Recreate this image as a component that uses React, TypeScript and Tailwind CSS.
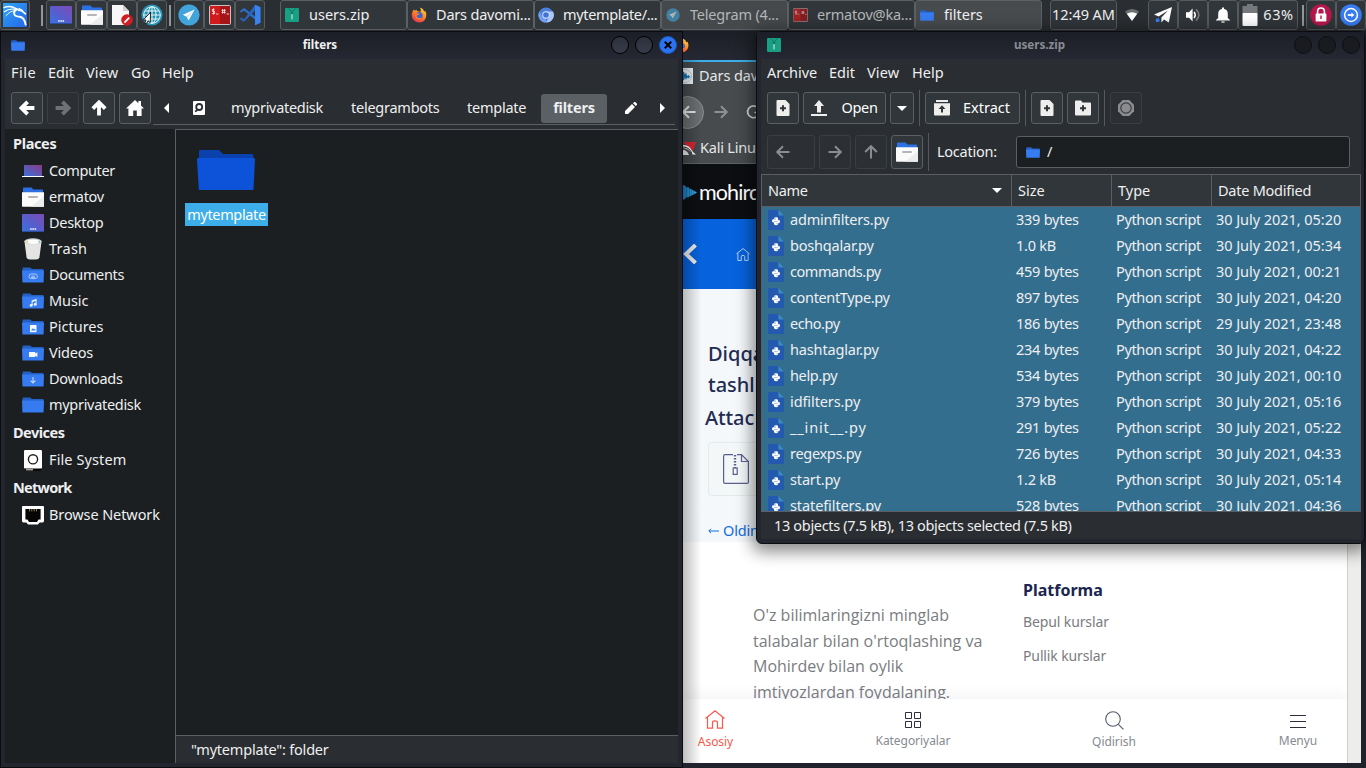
import React, { useId } from "react";

type Kind = "plain" | "doc" | "music" | "pic" | "video" | "down";

function Folder({ kind = "plain", className = "" }: { kind?: Kind; className?: string }) {
  return (
    <svg viewBox="0 0 22 16" preserveAspectRatio="none" className={className}>
      <path d="M0.5 1.2 Q0.5 0.5 1.2 0.5 H8 L10 2 H20.8 Q21.5 2 21.5 2.8 V6 H0.5Z" fill="#2461c4" />
      <path d="M0 3.6 H22 L21.6 15 Q21.6 15.6 21 15.6 H1 Q0.4 15.6 0.4 15Z" fill="#367bf0" />
      {kind === "doc" && (
        <g fill="none" stroke="#a9c9fb" strokeWidth="1">
          <rect x="7" y="7" width="8.4" height="4.6" rx="2.3" />
          <path d="M13 9.2H9.4M9 10.4h4" />
        </g>
      )}
      {kind === "music" && (
        <g fill="#e6effd">
          <path d="M9.6 7.6 L14.6 5.8 V11h-1V8l-3 1.1V12h-1z" />
          <circle cx="9.2" cy="12.2" r="1.5" />
          <circle cx="13.2" cy="11.2" r="1.5" />
        </g>
      )}
      {kind === "pic" && (
        <g>
          <rect x="8" y="6" width="6.5" height="7.2" fill="#f5f9ff" />
          <path d="M9 11.6 L10.8 9.2 12 10.4 12.8 9.6 13.6 11.6Z" fill="#367bf0" />
        </g>
      )}
      {kind === "video" && (
        <path d="M7 7h6.2v1.4L15.4 7.2v4.8L13.2 10.8V12H7z" fill="#f5f9ff" />
      )}
      {kind === "down" && (
        <g fill="none" stroke="#c3dafc" strokeWidth="1.1">
          <path d="M11 6v5.6M8.6 9.6 11 12l2.4-2.4" />
        </g>
      )}
    </svg>
  );
}

function HomeFolder({ className = "" }: { className?: string }) {
  return (
    <svg viewBox="0 0 22 20" className={className}>
      <path d="M1 5V1.2Q1 .4 1.8 .4H9.5L11.4 2.4H20.2Q21 2.4 21 3.2V6H1Z" fill="#2d70e4" />
      <path d="M0 5.3H22V19Q22 19.7 21.3 19.7H.7Q0 19.7 0 19Z" fill="#fbfbfb" />
      <path d="M22 9V19.7H9Z" fill="#ececec" />
      <rect x="6" y="9" width="10" height="2" rx="1" fill="#b5b5b5" />
    </svg>
  );
}

function DesktopIcon({ className = "" }: { className?: string }) {
  const id = useId();
  return (
    <svg viewBox="0 0 22 18" className={className}>
      <linearGradient id={id} x1="0" y1="1" x2="1" y2="0">
        <stop offset="0" stopColor="#3673e2" />
        <stop offset="0.5" stopColor="#5a5ccc" />
        <stop offset="1" stopColor="#7d4db4" />
      </linearGradient>
      <rect width="22" height="18" rx="0.8" fill={`url(#${id})`} />
      <path d="M0 17.5H22" stroke="#2c4e9e" />
      <path d="M8.2 15h1.5M10.4 15h1.5M12.6 15h1.5" stroke="#fff" strokeWidth="1.3" />
    </svg>
  );
}

function ComputerIcon() {
  return (
    <svg viewBox="0 0 22 14" className="h-[14px] w-[22px]">
      <linearGradient id="pc" x1="0" y1="1" x2="1" y2="0">
        <stop offset="0" stopColor="#3a6fd8" />
        <stop offset="1" stopColor="#8c3a86" />
      </linearGradient>
      <rect x="2" y="1" width="18" height="11" fill="url(#pc)" />
      <path d="M0 12.5H22" stroke="#fff" />
    </svg>
  );
}

function TrashIcon() {
  return (
    <svg viewBox="0 0 18 22" className="h-[22px] w-[18px]">
      <path d="M0.4 3 H17.6 L15.4 19.4 Q15 21.6 9 21.6 T2.6 19.4Z" fill="#e4e4e2" />
      <ellipse cx="9" cy="3.3" rx="8.7" ry="3" fill="#cfcfcd" />
      <ellipse cx="9" cy="3.8" rx="7.4" ry="2.2" fill="#fdfdfd" />
      <path d="M2 4.6 3.4 2.8 4.6 4.6Z" fill="#e6b94a" />
      <path d="M14 3.4 15.8 3.2 15.6 5Z" fill="#36a38c" />
    </svg>
  );
}

function DiskIcon() {
  return (
    <svg viewBox="0 0 18 21" className="h-[21px] w-[18px]">
      <rect x="0" y="0" width="18" height="18.5" rx="1.2" fill="#fff" />
      <path d="M1 19.8H17" stroke="#050505" strokeWidth="1.8" />
      <path d="M2 19.8H9" stroke="#e5e5e5" strokeWidth="1" />
      <circle cx="9" cy="9.3" r="4.6" fill="none" stroke="#1b1f22" strokeWidth="1.4" />
    </svg>
  );
}

function NetIcon() {
  return (
    <svg viewBox="0 0 22 19" className="h-[19px] w-[22px]">
      <path d="M1 0H21Q22 0 22 1V15Q22 16.4 20.6 16.6H17.6L16 18.6H6L4.4 16.6H1.4Q0 16.4 0 15V1Q0 0 1 0Z" fill="#fff" />
      <path d="M3.4 3H18.6V13.4H16.6L15 16H7L5.4 13.4H3.4Z" fill="#050505" />
      <path d="M7.5 3V5.4M9.8 3V5.4M12.2 3V5.4M14.5 3V5.4" stroke="#a39a62" strokeWidth="0.8" />
    </svg>
  );
}

function ZipIcon({ className = "" }: { className?: string }) {
  return (
    <svg viewBox="0 0 14 14" className={className}>
      <rect width="14" height="14" rx="1.3" fill="#18a085" />
      <path d="M3.6 .4 6.4 3.4V6M10.4 .4 7.6 3.4V6" fill="none" stroke="#12705f" strokeWidth="0.9" />
      <rect x="6.1" y="6" width="1.8" height="5.4" rx=".6" fill="#8cc9bd" />
    </svg>
  );
}

function PythonIcon() {
  return (
    <svg viewBox="0 0 16 20" className="h-[20px] w-[16px] shrink-0">
      <path d="M1 0H10.4L16 5.4V19Q16 20 15 20H1Q0 20 0 19V1Q0 0 1 0Z" fill="#2459b0" />
      <path d="M10.4 0V4.4Q10.4 5.4 11.4 5.4H16Z" fill="#3a8cbf" />
      <path d="M8 7.2C9.4 7.2 10 7.6 10 8.6V10.2Q10 11.2 9 11.2H7Q6 11.2 6 12.4H5Q4 12.2 4 10.8T5 9.2H8.1V8.8H6V8.4Q6 7.2 8 7.2Z" fill="#fff" />
      <path d="M8 15.2C6.6 15.2 6 14.8 6 13.8V12.6Q6 11.6 7 11.6H9Q10.4 11.4 10.4 9.8H11Q12 10.2 12 11.6T11 13.2H7.9V13.6H10V14Q10 15.2 8 15.2Z" fill="#fff" />
    </svg>
  );
}

function Firefox({ className = "" }: { className?: string }) {
  const id = useId();
  return (
    <svg viewBox="0 0 16 16" className={className}>
      <linearGradient id={id} x1="0.8" y1="0" x2="0.2" y2="1">
        <stop offset="0" stopColor="#ffd43c" />
        <stop offset="0.45" stopColor="#ff8a1f" />
        <stop offset="1" stopColor="#e8245c" />
      </linearGradient>
      <path d="M1.6 4.6 2.6 2.4 4.2 3.8 5.2 2.6 6 4Q8 4.2 8.6 5L10 4 9.2 .6Q12.4 1.6 13.2 4.4L14.4 4Q16 7 15 10.4Q13.2 15.4 8 15.4Q2.6 15.2 .9 10Q.2 7 1.6 4.6Z" fill={`url(#${id})`} />
      <circle cx="8" cy="8.8" r="3.7" fill="#3b63d8" />
      <path d="M3.8 6.4Q6 5.2 8.6 6.8L7.4 8.2H5.8Q5.4 9.8 7 10.8Q9 11.6 11.4 10.2Q10.4 13 7.4 12.8Q3.8 12 3.8 6.4Z" fill="#ff7b23" />
    </svg>
  );
}

function Chromium() {
  return (
    <svg viewBox="0 0 16 16" className="h-[16px] w-[16px]">
      <circle cx="8" cy="8" r="7.6" fill="#4d80dc" />
      <path d="M8 4.4H15A7.6 7.6 0 0 1 8 15.6L11.3 9.8Z" fill="#a9c6fa" />
      <path d="M1.2 4.6 4.8 10 8 11.6 8 15.6A7.6 7.6 0 0 1 1.2 4.6Z" fill="#6f9df0" />
      <circle cx="8" cy="8" r="3.7" fill="#dfeafd" />
      <circle cx="8" cy="8" r="2.8" fill="#3f73d4" />
    </svg>
  );
}

function Telegram({ className = "" }: { className?: string }) {
  return (
    <svg viewBox="0 0 22 22" className={className}>
      <circle cx="11" cy="11" r="10.6" fill="#41a5dc" />
      <path d="M16.6 5.4 4.8 10.8 8.6 12.8 10.6 16.6Z" fill="#fff" />
      <path d="M16.6 5.4 8.6 12.8 9.2 13.4Z" fill="#a8d0ea" />
    </svg>
  );
}

function Terminal({ className = "" }: { className?: string }) {
  return (
    <svg viewBox="0 0 22 20" className={className}>
      <rect x=".5" y=".5" width="21" height="19" rx="1" fill="#a51417" stroke="#c9c1c1" />
      <path d="M1 1H11V19H1Z" fill="#d01a1c" />
      <g stroke="#f4e4e4" fill="none" strokeWidth="0.9">
        <path d="M5.6 4.4H3.4V6.4H5.6V8.6H3.2M4.5 3.4V9.6M7 9H9.4" />
        <path d="M13.6 4V8.6M15.6 4V8.6M12.6 5.4H16.6M12.6 7.4H16.6M17.6 9H20" />
      </g>
    </svg>
  );
}

function Globe() {
  return (
    <svg viewBox="0 0 22 22" className="h-[22px] w-[22px]">
      <circle cx="11" cy="11" r="10.6" fill="#2793b2" />
      <g fill="none" stroke="#e6f7fb" strokeWidth="1">
        <circle cx="11" cy="11" r="8.3" />
        <ellipse cx="11" cy="11" rx="4" ry="8.3" />
        <path d="M11 2.7V19.3M2.7 11H19.3M4 7H18M4 15H18" />
      </g>
      <path d="M9.6 8.2 2.2 16 5 16 3.8 18.8 5.6 19.6 7 16.8 9.2 18.6Z" fill="#fff" stroke="#111" strokeWidth="0.9" />
    </svg>
  );
}

function EditorIcon() {
  return (
    <svg viewBox="0 0 22 22" className="h-[22px] w-[22px]">
      <path d="M1 1H12L18 7V21H1Z" fill="#f7f7f7" />
      <path d="M12 1V7H18Z" fill="#d0d0d0" />
      <circle cx="16" cy="16" r="5.8" fill="#d01d22" />
      <path d="M13.4 18.6 18.2 13.6" stroke="#fff" strokeWidth="1.8" />
    </svg>
  );
}

function VsCode() {
  return (
    <svg viewBox="0 0 22 22" className="h-[22px] w-[22px]">
      <path d="M16 .8 21.4 3.2V18.8L16 21.2V15.6L5 6.4 2.2 8.4.8 7.4 4 4.4 5.6 4.2 16 12.6Z" fill="#2f6fd0" />
      <path d="M16 .8V6.6L5.4 17.4 4 17.6.8 15 2.2 13.4 5 15.4 15.4 1.4Z" fill="#2a63bd" />
      <path d="M16 .8 21.4 3.2V18.8L16 21.2Z" fill="#3a83ea" />
    </svg>
  );
}

function KaliDragon() {
  return (
    <svg viewBox="0 0 24 24" className="h-[24px] w-[24px]">
      <linearGradient id="kali" x1="0" y1="0" x2="1" y2="1">
        <stop offset="0" stopColor="#2fa4f2" />
        <stop offset="1" stopColor="#2466ea" />
      </linearGradient>
      <rect width="24" height="24" fill="url(#kali)" />
      <g fill="none" stroke="#fff" strokeLinecap="round" strokeLinejoin="round">
        <path d="M1 4.600Q7 2 13 5.600" strokeWidth="1.300" />
        <path d="M1.200 8.800Q6.500 5 12.800 6.400" strokeWidth="1.100" />
        <path d="M3 12.600Q6.600 7.800 12 7.400" strokeWidth="0.900" />
        <path d="M13.600 6.400Q10.400 8 11.200 11Q12.200 13.600 16.600 13.800Q21.400 14.400 22.600 21.600" strokeWidth="1.900" />
        <path d="M13 5.600Q15.600 7.600 18.600 7.600L22.400 10.800" strokeWidth="1.700" />
        <path d="M16 5.600 19.600 7.600" strokeWidth="1.200" />
      </g>
    </svg>
  );
}

function Arrow({ dir, className = "" }: { dir: "l" | "r" | "u"; className?: string }) {
  const rot = dir === "l" ? "" : dir === "r" ? "rotate(180 8 8)" : "rotate(90 8 8)";
  return (
    <svg viewBox="0 0 16 16" className={`h-[16px] w-[16px] ${className}`} fill="none" stroke="currentColor">
      <path d="M15.4 8H2.6M8.6 1.8 2.400 8l6.2 6.2" strokeWidth="3.8" transform={rot} />
    </svg>
  );
}

function ThinArrow({ dir, className = "" }: { dir: "l" | "r" | "u"; className?: string }) {
  const rot = dir === "l" ? "" : dir === "r" ? "rotate(180 8 8)" : "rotate(90 8 8)";
  return (
    <svg viewBox="0 0 16 16" className={`h-[16px] w-[16px] ${className}`} fill="none" stroke="currentColor">
      <path d="M14.5 8H2.2M8 2.2 2.2 8 8 13.8" strokeWidth="2" transform={rot} />
    </svg>
  );
}

function PanelBtn({ w, children }: { w: string; children: React.ReactNode }) {
  return (
    <div className={`flex h-[30px] shrink-0 items-center justify-center rounded-[3px] border border-[#565b5e] bg-[#31363a] ${w}`}>
      {children}
    </div>
  );
}

function Task({ label, icon, tone = "bg-[#31363a] text-[#eeeff0]", spacing = "tracking-[-0.2px]" }: { label: string; icon: React.ReactNode; tone?: string; spacing?: string }) {
  return (
    <div className={`flex h-[30px] w-[127px] shrink-0 items-center rounded-[3px] border border-[#5b6063] pl-[3px] text-[14.5px] whitespace-nowrap ${tone}`}>
      <span className="flex w-[16px] justify-center">{icon}</span>
      <span className={`ml-[9px] ${spacing}`}>{label}</span>
    </div>
  );
}

function Panel() {
  return (
    <header className="flex h-[31px] w-full items-start bg-[#2a2d31] pb-px text-[#eeeff0]">
      <PanelBtn w="w-[30px]"><KaliDragon /></PanelBtn>
      <div className="mt-[5px] ml-[11px] h-[21px] w-[2px] shrink-0 bg-[#94979a]" />
      <div className="ml-[3px] flex">
        <PanelBtn w="w-[30px]"><DesktopIcon className="h-[18px] w-[22px]" /></PanelBtn>
        <PanelBtn w="w-[31px]"><HomeFolder className="h-[20px] w-[22px]" /></PanelBtn>
        <PanelBtn w="w-[30px]"><EditorIcon /></PanelBtn>
        <PanelBtn w="w-[30px]"><Globe /></PanelBtn>
      </div>
      <div className="mt-[5px] ml-[2px] h-[21px] w-[2px] shrink-0 bg-[#94979a]" />
      <div className="ml-[3px] flex">
        <PanelBtn w="w-[30px]"><Telegram className="h-[22px] w-[22px]" /></PanelBtn>
        <PanelBtn w="w-[31px]"><Terminal className="h-[20px] w-[22px]" /></PanelBtn>
        <PanelBtn w="w-[30px]"><VsCode /></PanelBtn>
      </div>
      <div className="ml-[15px] flex">
        <Task label="users.zip" spacing="" icon={<ZipIcon className="h-[14px] w-[14px]" />} />
        <Task label="Dars davomi..." icon={<Firefox className="h-[16px] w-[16px]" />} />
        <Task label="mytemplate/..." spacing="tracking-[-0.35px]" icon={<Chromium />} />
        <Task label="Telegram (4..." tone="bg-[#45494c] text-[#b4b6b8]" icon={<Telegram className="h-[14px] w-[14px] opacity-60" />} />
        <Task label="ermatov@ka..." tone="bg-[#31363a] text-[#b4b6b8]" icon={<Terminal className="h-[14px] w-[15px] opacity-70" />} />
        <Task label="filters" spacing="" tone="bg-[#484b4e] text-[#eeeff0]" icon={<Folder className="h-[11px] w-[14px]" />} />
      </div>
      <div className="ml-[8px] flex">
        <PanelBtn w="w-[67px]"><span className="text-[14.5px] tracking-[-0.05px] whitespace-nowrap">12:49 AM</span></PanelBtn>
      </div>
      <div className="flex h-[30px] w-[31px] items-center justify-center pr-[2px]">
        <svg viewBox="0 0 14 12" className="h-[12px] w-[14px]">
          <path d="M7 12 0 2.6Q7 -2.4 14 2.6Z" fill="#6d7174" />
          <path d="M7 12 1.8 4.8Q7 1.6 12.2 4.8Z" fill="#fff" />
        </svg>
      </div>
      <div className="flex">
        <PanelBtn w="w-[30px]">
          <svg viewBox="0 0 18 16" className="h-[16px] w-[18px]">
            <path d="M18 0 0 7.600 4.600 9.600 14 3.600 7.400 10.600V15.600L10 12.400 14.800 15.400Z" fill="#fff" />
            <circle cx="3.600" cy="13.200" r="2" fill="#367bf0" />
          </svg>
        </PanelBtn>
        <PanelBtn w="w-[30px]">
          <svg viewBox="0 0 16 16" className="h-[16px] w-[16px]">
            <path d="M1 5.2H4L7.6 1.6V14.4L4 10.8H1Z" fill="#fff" />
            <path d="M9 5Q11.4 8 9 11" stroke="#fff" strokeWidth="1.6" fill="none" />
            <path d="M11 2.4Q16.6 8 11 13.6" stroke="#777b7e" strokeWidth="1.6" fill="none" />
          </svg>
        </PanelBtn>
        <PanelBtn w="w-[30px]">
          <svg viewBox="0 0 16 16" className="h-[16px] w-[16px]" fill="#fff">
            <path d="M7 .6H9V2Q12.8 2.6 12.8 7V11L15 13V13.6H1V13L3.2 11V7Q3.2 2.6 7 2Z" />
            <path d="M6.4 14.4H9.6V15.6H6.4Z" />
          </svg>
        </PanelBtn>
        <PanelBtn w="w-[60px]">
          <svg viewBox="0 0 16 22" className="h-[22px] w-[16px] shrink-0">
            <path d="M5 0H11V2H15.5V10H.5V2H5Z" fill="#75797c" />
            <rect x=".5" y="9" width="15" height="13" rx="1" fill="#fff" />
          </svg>
          <span className="ml-[5px] text-[14.5px] tracking-[0.6px]">63%</span>
        </PanelBtn>
      </div>
      <div className="mt-[5px] ml-[4px] h-[21px] w-[2px] shrink-0 bg-[#94979a]" />
      <div className="ml-[2px] flex">
        <PanelBtn w="w-[30px]">
          <svg viewBox="0 0 22 22" className="h-[22px] w-[22px]">
            <circle cx="11" cy="11" r="10.8" fill="#b5174b" />
            <path d="M7.6 10V7.4Q7.6 4 11 4T14.4 7.4V10" fill="none" stroke="#fff" strokeWidth="1.6" />
            <rect x="5.6" y="9.4" width="10.8" height="8" rx=".6" fill="#fff" />
            <path d="M11 11.6V15" stroke="#b5174b" strokeWidth="1.4" />
          </svg>
        </PanelBtn>
        <PanelBtn w="w-[30px]">
          <svg viewBox="0 0 22 22" className="h-[22px] w-[22px]">
            <circle cx="11" cy="11" r="10.8" fill="#367bf0" />
            <circle cx="11" cy="11" r="6.4" fill="none" stroke="#fff" strokeWidth="1.5" />
            <path d="M7.8 11H12" stroke="#fff" strokeWidth="1.8" />
            <path d="M11.4 8.4 14.4 11 11.4 13.6Z" fill="#fff" />
          </svg>
        </PanelBtn>
      </div>
    </header>
  );
}

function TitleBar({ title, icon, active }: { title: string; icon: React.ReactNode; active: boolean }) {
  const dot = active ? "border-black bg-linear-to-b from-[#2c303c] to-[#383c4a]" : "border-[#0e0f13] bg-[#1a1b20]";
  return (
    <div className="flex h-[27px] shrink-0 items-center bg-linear-to-b from-[#1c1e27] to-[#252832] pb-px pl-[10px]">
      <span className="flex w-[14px]">{icon}</span>
      <span className={`flex-1 text-center text-[11.6px] font-bold ${active ? "pl-[4px] text-[#f2f2f2]" : "pl-[4px] text-[#888b93]"}`}>{title}</span>
      <div className={`flex gap-[6px] ${active ? "pr-[5px]" : "pr-[4px]"}`}>
        <span className={`h-[18px] w-[18px] rounded-full border ${dot}`} />
        <span className={`h-[18px] w-[18px] rounded-full border ${dot}`} />
        {active ? (
          <span className="flex h-[18px] w-[18px] items-center justify-center rounded-full border border-[#1c56c0] bg-[#2a74f2]">
            <svg viewBox="0 0 8 8" className="h-[8px] w-[8px]"><path d="M.8 .8 7.2 7.2M7.2 .8 .8 7.2" stroke="#000" strokeWidth="2" /></svg>
          </span>
        ) : (
          <span className={`h-[18px] w-[18px] rounded-full border ${dot}`} />
        )}
      </div>
    </div>
  );
}

function Btn({ w = "w-[32px]", h = "h-[32px]", dim = false, children }: { w?: string; h?: string; dim?: boolean; children: React.ReactNode }) {
  return (
    <div className={`flex shrink-0 items-center justify-center rounded-[3px] border ${w} ${h} ${dim ? "border-[#3b3f43] bg-[#2c3034] text-[#6f7274]" : "border-[#5b5f63] bg-[#31363b] text-white"}`}>
      {children}
    </div>
  );
}

function PlaceRow({ icon, label, spacing = "" }: { icon: React.ReactNode; label: string; spacing?: string }) {
  return (
    <div className="flex h-[26px] items-center pl-[17px]">
      <span className="flex w-[22px] justify-center">{icon}</span>
      <span className={`ml-[5px] whitespace-nowrap ${spacing}`}>{label}</span>
    </div>
  );
}

function FileManager() {
  return (
    <section className="absolute top-[31px] left-0 flex h-[737px] w-[683px] flex-col rounded-t-[6px] border border-[#0b0c10] bg-[#23252f]">
      <TitleBar active title="filters" icon={<Folder className="h-[11px] w-[14px]" />} />
      <div className="mr-[4px] mb-[4px] ml-[4px] flex min-h-0 flex-1 flex-col bg-[#2a2d31] text-[14.5px] text-[#eeeff0]">
        <nav className="flex h-[27px] shrink-0 items-center pl-[6px]">
          <span className="w-[37px] tracking-[0.5px]">File</span>
          <span className="w-[38px]">Edit</span>
          <span className="w-[45px] tracking-[0.15px]">View</span>
          <span className="w-[31px]">Go</span>
          <span>Help</span>
        </nav>
        <div className="flex h-[43px] shrink-0 items-start pt-[6px] pl-[6px]">
          <div className="flex gap-[4px]">
            <Btn><Arrow dir="l" /></Btn>
            <Btn dim><Arrow dir="r" /></Btn>
            <Btn><Arrow dir="u" /></Btn>
            <Btn>
              <svg viewBox="0 0 18 16" className="h-[16px] w-[18px]" fill="#fff">
                <path d="M9 0 12.4 3.2V1H15V5.6L18 8.6H15.6V16H10.8V10.6H7.2V16H2.4V8.6H0Z" />
              </svg>
            </Btn>
          </div>
          <div className="ml-[2px] flex h-[33px] w-[522px] items-center border-b border-[#5b5f63]">
            <svg viewBox="0 0 5 10" className="ml-[11px] h-[10px] w-[5px]"><path d="M5 0V10L0 5Z" fill="#fff" /></svg>
            <svg viewBox="0 0 12 14" className="ml-[24px] h-[14px] w-[12px]">
              <rect width="12" height="14" rx="1" fill="#fff" />
              <circle cx="6.2" cy="6" r="3" fill="none" stroke="#2a2d31" strokeWidth="1.8" />
              <path d="M2 10.500 4.400 9.200" stroke="#2a2d31" strokeWidth="1.6" />
            </svg>
            <span className="ml-[26px] w-[92px] tracking-[-0.3px]">myprivatedisk</span>
            <span className="ml-[28px] w-[88px] tracking-[-0.25px]">telegrambots</span>
            <span className="ml-[28px] w-[59px] tracking-[-0.25px]">template</span>
            <span className="ml-[15px] flex h-[29px] w-[66px] items-center justify-center rounded-[3px] bg-[#5b6064] font-bold tracking-[-0.2px]">filters</span>
            <svg viewBox="0 0 12 12" className="ml-[18px] h-[12px] w-[12px]" fill="#fff">
              <path d="M0 12V9L7 2 10 5 3 12ZM8 1.2 9.2 0H10.2L12 1.8V2.8L10.8 4Z" />
            </svg>
            <svg viewBox="0 0 5 10" className="ml-[23px] h-[10px] w-[5px]"><path d="M0 0V10L5 5Z" fill="#fff" /></svg>
          </div>
        </div>
        <div className="flex min-h-0 flex-1 bg-[#1b1f22]">
          <aside className="w-[170px] shrink-0">
            <div className="flex h-[29px] items-center pl-[8px] font-bold tracking-[-0.35px]">Places</div>
            <PlaceRow label="Computer" spacing="tracking-[-0.35px]" icon={<ComputerIcon />} />
            <PlaceRow label="ermatov" spacing="tracking-[-0.3px]" icon={<HomeFolder className="h-[20px] w-[22px]" />} />
            <PlaceRow label="Desktop" spacing="tracking-[-0.3px]" icon={<DesktopIcon className="h-[18px] w-[22px]" />} />
            <PlaceRow label="Trash" spacing="tracking-[0.25px]" icon={<TrashIcon />} />
            <PlaceRow label="Documents" spacing="tracking-[-0.35px]" icon={<Folder kind="doc" className="h-[16px] w-[22px]" />} />
            <PlaceRow label="Music" spacing="tracking-[-0.1px]" icon={<Folder kind="music" className="h-[16px] w-[22px]" />} />
            <PlaceRow label="Pictures" icon={<Folder kind="pic" className="h-[16px] w-[22px]" />} />
            <PlaceRow label="Videos" spacing="tracking-[-0.2px]" icon={<Folder kind="video" className="h-[16px] w-[22px]" />} />
            <PlaceRow label="Downloads" spacing="tracking-[-0.25px]" icon={<Folder kind="down" className="h-[16px] w-[22px]" />} />
            <PlaceRow label="myprivatedisk" spacing="tracking-[-0.3px]" icon={<Folder className="h-[16px] w-[22px]" />} />
            <div className="flex h-[29px] items-center pl-[8px] font-bold tracking-[-0.5px]">Devices</div>
            <PlaceRow label="File System" spacing="tracking-[0.1px]" icon={<DiskIcon />} />
            <div className="flex h-[29px] items-center pl-[8px] font-bold tracking-[-0.75px]">Network</div>
            <PlaceRow label="Browse Network" spacing="tracking-[-0.1px]" icon={<NetIcon />} />
          </aside>
          <div className="flex flex-1 flex-col border-l border-[#5b5f63]">
            <div className="flex-1 border-t border-[#5b5f63] pt-[19px] pl-[9px]">
              <div className="flex w-[83px] flex-col items-start">
                <svg viewBox="0 0 58 42" className="ml-[12px] h-[42px] w-[58px]">
                  <path d="M2 2Q2 1 3 1H22L26 5H55Q56.400 5 56.400 7V12H2Z" fill="#0b41ad" />
                  <path d="M0 10.500Q0 9 1.500 9H56.500Q58 9 58 10.500L56.500 40Q56.500 41 55.500 41H3Q1.800 41 1.800 40Z" fill="#0d53da" />
                </svg>
                <span className="mt-[12px] flex h-[23px] w-[83px] items-center justify-center bg-[#3daee9] tracking-[-0.35px] text-white">mytemplate</span>
              </div>
            </div>
            <div className="flex h-[28px] items-center border-t border-[#5b5f63] bg-[#2a2d31] pl-[15px] tracking-[-0.2px]">"mytemplate": folder</div>
          </div>
        </div>
      </div>
    </section>
  );
}

const files: [string, string, string, string][] = [
  ["adminfilters.py", "339 bytes", "30 July 2021, 05:20", "tracking-[-0.2px]"],
  ["boshqalar.py", "1.0 kB", "30 July 2021, 05:34", "tracking-[-0.2px]"],
  ["commands.py", "459 bytes", "30 July 2021, 00:21", "tracking-[-0.45px]"],
  ["contentType.py", "897 bytes", "30 July 2021, 04:20", "tracking-[-0.35px]"],
  ["echo.py", "186 bytes", "29 July 2021, 23:48", "tracking-[-0.45px]"],
  ["hashtaglar.py", "234 bytes", "30 July 2021, 04:22", "tracking-[-0.15px]"],
  ["help.py", "534 bytes", "30 July 2021, 00:10", "tracking-[-0.35px]"],
  ["idfilters.py", "379 bytes", "30 July 2021, 05:16", "tracking-[-0.1px]"],
  ["__init__.py", "291 bytes", "30 July 2021, 05:22", "tracking-[0.85px]"],
  ["regexps.py", "726 bytes", "30 July 2021, 04:33", "tracking-[-0.3px]"],
  ["start.py", "1.2 kB", "30 July 2021, 05:14", "tracking-[-0.15px]"],
  ["statefilters.py", "528 bytes", "30 July 2021, 04:36", "tracking-[-0.1px]"],
];

function PageIcon({ folder = false }: { folder?: boolean }) {
  return (
    <svg viewBox="0 0 16 16" className="h-[16px] w-[16px]">
      {folder ? (
        <path d="M0 1.500Q0 .5 1 .5H6L7.500 2.500H15Q16 2.500 16 3.500V14.500Q16 15.500 15 15.500H1Q0 15.500 0 14.500Z" fill="#eeeeec" />
      ) : (
        <path d="M2.500 0H10.500L14.500 4V15Q14.500 16 13.500 16H2.500Q1.500 16 1.500 15V1Q1.500 0 2.500 0Z" fill="#eeeeec" />
      )}
      <path d="M8 5.200V11.200M5 8.200H11" stroke="#31363b" strokeWidth="2" />
    </svg>
  );
}

function Archiver() {
  return (
    <section className="absolute top-[31px] left-[756px] flex h-[513px] w-[609px] flex-col rounded-[6px] border border-[#0b0c10] bg-[#23252f] shadow-[0_4px_16px_4px_rgba(0,0,0,0.45)]">
      <TitleBar active={false} title="users.zip" icon={<ZipIcon className="h-[14px] w-[14px]" />} />
      <div className="mr-[3px] mb-[4px] ml-[4px] flex min-h-0 flex-1 flex-col bg-[#2a2d31] text-[14.5px] text-[#eeeff0]">
        <nav className="flex h-[27px] shrink-0 items-center pl-[6px]">
          <span className="w-[62px]">Archive</span>
          <span className="w-[38px]">Edit</span>
          <span className="w-[45px] tracking-[0.15px]">View</span>
          <span>Help</span>
        </nav>
        <div className="flex h-[45px] shrink-0 items-start gap-[4px] pt-[6px] pl-[6px]">
          <Btn><PageIcon /></Btn>
          <Btn w="w-[83px]">
            <svg viewBox="0 0 16 16" className="h-[16px] w-[16px]" fill="#eeeeec">
              <path d="M8 0 13 6H10V12.400H6V6H3ZM0 14H16V16H0Z" />
            </svg>
            <span className="ml-[14px] tracking-[-0.3px]">Open</span>
          </Btn>
          <Btn w="w-[24px]"><svg viewBox="0 0 10 5" className="h-[5px] w-[10px]"><path d="M0 0H10L5 5Z" fill="#fff" /></svg></Btn>
          <div className="mt-[-2px] mr-px ml-px h-[36px] w-px bg-[#55595d]" />
          <Btn w="w-[95px]">
            <svg viewBox="0 0 16 16" className="h-[16px] w-[16px]">
              <path d="M2 0H14V2H2ZM0 3.200H16V14.500Q16 15.500 15 15.500H1Q0 15.500 0 14.500Z" fill="#eeeeec" />
              <path d="M8 5.200 11.400 9H9V12.600H7V9H4.600Z" fill="#31363b" />
            </svg>
            <span className="mr-px ml-[13px]">Extract</span>
          </Btn>
          <div className="mt-[-2px] mr-px ml-px h-[36px] w-px bg-[#55595d]" />
          <Btn><PageIcon /></Btn>
          <Btn><PageIcon folder /></Btn>
          <div className="mt-[-2px] mr-px ml-px h-[36px] w-px bg-[#55595d]" />
          <Btn dim>
            <svg viewBox="0 0 16 16" className="h-[16px] w-[16px]">
              <path d="M4.700 0H11.300L16 4.700V11.300L11.300 16H4.700L0 11.300V4.700Z" fill="#8a8c8e" />
              <circle cx="8" cy="8" r="5.200" fill="#8a8c8e" stroke="#3b3e41" strokeWidth="1.200" />
            </svg>
          </Btn>
        </div>
        <div className="flex h-[43px] shrink-0 items-start gap-[4px] pt-[4px] pl-[6px]">
          <Btn dim w="w-[48px]" h="h-[34px]"><ThinArrow dir="l" className="mr-[16px] text-[#8a8c8e]" /></Btn>
          <Btn dim h="h-[34px]"><ThinArrow dir="r" className="text-[#8a8c8e]" /></Btn>
          <Btn dim h="h-[34px]"><ThinArrow dir="u" className="text-[#8a8c8e]" /></Btn>
          <Btn h="h-[34px]"><HomeFolder className="h-[20px] w-[22px]" /></Btn>
          <div className="mt-[-2px] ml-px h-[38px] w-px bg-[#55595d]" />
          <span className="ml-[4px] flex h-[34px] w-[75px] items-center tracking-[-0.25px]">Location:</span>
          <div className="mt-px flex h-[32px] w-[334px] items-center rounded-[3px] border border-[#5b5f63] bg-[#1b1f22] pl-[9px]">
            <Folder className="h-[11px] w-[14px]" />
            <span className="ml-[7px]">/</span>
          </div>
        </div>
        <div className="flex min-h-0 flex-1 flex-col border border-[#5b5f63]">
          <div className="flex h-[32px] shrink-0 items-center border-b border-[#5b5f63] bg-[#31363a]">
            <div className="flex h-full w-[250px] items-center justify-between border-r border-[#5b5f63] pr-[9px] pl-[6px]">
              <span className="tracking-[-0.35px]">Name</span>
              <svg viewBox="0 0 10 5" className="h-[5px] w-[10px]"><path d="M0 0H10L5 5Z" fill="#fff" /></svg>
            </div>
            <div className="flex h-full w-[100px] items-center border-r border-[#5b5f63] pl-[6px]">Size</div>
            <div className="flex h-full w-[100px] items-center border-r border-[#5b5f63] pl-[6px]">Type</div>
            <div className="pl-[6px] tracking-[-0.25px]">Date Modified</div>
          </div>
          <div className="min-h-0 flex-1 overflow-hidden bg-[#346e8f]">
            {files.map(([name, size, date, spacing]) => (
              <div key={name} className="flex h-[26px] items-center whitespace-nowrap">
                <div className="flex w-[254px] items-center gap-[6px] pl-[6px]"><PythonIcon /><span className={spacing}>{name}</span></div>
                <div className="w-[100px] tracking-[-0.25px]">{size}</div>
                <div className="w-[100px] tracking-[-0.37px]">Python script</div>
                <div className="tracking-[-0.05px]">{date}</div>
              </div>
            ))}
          </div>
        </div>
        <div className="flex h-[27px] shrink-0 items-center pl-[13px] tracking-[-0.33px]">13 objects (7.5 kB), 13 objects selected (7.5 kB)</div>
      </div>
    </section>
  );
}

function HouseOutline({ className = "" }: { className?: string }) {
  return (
    <svg viewBox="0 0 20 19" className={className} fill="none" stroke="currentColor" strokeWidth="1.2">
      <path d="M.5 8.500 10 .8 19.500 8.500M2.500 7.600V18.200H7.500V12.500Q7.500 10.800 10 10.800T12.500 12.500V18.200H17.500V7.600" />
    </svg>
  );
}

function Browser() {
  return (
    <section className="absolute top-[31px] left-[683px] flex h-[737px] w-[683px] flex-col border-r-[5px] border-b-[5px] border-[#21232c] bg-white font-['Noto_Sans','Open_Sans',sans-serif]">
      <div className="flex h-[29px] shrink-0 items-center overflow-hidden bg-linear-to-b from-[#1c1e27] to-[#252832]">
        <Firefox className="ml-[-9px] h-[15px] w-[15px]" />
      </div>
      <div className="flex h-[104px] shrink-0 flex-col overflow-hidden border-t-2 border-b border-t-[#3daee9] border-b-[#606366] bg-[#474b4e] text-[14.5px] text-[#e6e7e8]">
        <div className="flex h-[28px] items-center">
          <svg viewBox="0 0 10 16" className="h-[16px] w-[10px]">
            <rect width="10" height="16" fill="#f2f6f9" />
            <circle cx="2" cy="8" r="6.600" fill="none" stroke="#b9d6e8" />
            <path d="M0 3.500 1.500 4.200V6.500L3 4.800 4.200 8 5.400 7 8 9.500 6.200 9.200 5.200 10.800 4.200 9.600 3 12 2 9.500 1 12.500 0 12Z" fill="#1277b8" />
          </svg>
          <span className="ml-[6px] tracking-[-0.1px] whitespace-nowrap">Dars dav</span>
        </div>
        <div className="flex h-[44px] items-center">
          <span className="ml-[-12px] flex h-[33px] w-[33px] items-center justify-end rounded-full border border-[#8c8e90] bg-[#6c6f71] pr-[6px]"><ThinArrow dir="l" /></span>
          <ThinArrow dir="r" className="ml-[9px] text-[#8e9092]" />
          <svg viewBox="0 0 16 16" className="ml-[17px] h-[15px] w-[15px]" fill="none" stroke="#d6d7d8" strokeWidth="1.800"><path d="M13 3.400A6.300 6.300 0 1 0 14.300 8H9" /></svg>
        </div>
        <div className="flex h-[28px] items-center">
          <svg viewBox="0 0 13 13" className="h-[13px] w-[13px]"><path d="M0 0H13L10 9Z" fill="#d92630" /><path d="M0 3Q6 3 8 7T13 12.500H9Q7 7 0 6Z" fill="#fff" /><path d="M0 8Q4 8 6 13H0Z" fill="#ececec" /><path d="M0 5Q7 5 9 12.500" stroke="#222" strokeWidth="1" fill="none" /></svg>
          <span className="ml-[4px] tracking-[-0.2px] whitespace-nowrap">Kali Linu</span>
        </div>
      </div>
      <div className="flex h-[55px] shrink-0 items-center bg-[#0d0e12] text-white">
        <svg viewBox="0 0 14 16" className="h-[16px] w-[14px]">
          <linearGradient id="wave" x1="0" x2="1">
            <stop offset="0" stopColor="#1679bd" />
            <stop offset="1" stopColor="#35b4f5" />
          </linearGradient>
          <path d="M0 1.500Q0 .5 1.400 1.200L3.200 3V13.500L1.400 15.500Q0 16 0 15ZM3.400 3.200 6.200 3.600V13L3.400 13.400ZM6.400 4.400 8.800 5.200V11.600L6.400 12.600ZM9 5.800 10.800 6.400V10.600L9 11.200ZM11 6.800 14 8.500 11 10.200Z" fill="url(#wave)" />
        </svg>
        <span className="ml-[2px] w-[58px] font-['Lato',sans-serif] text-[21.500px] leading-[28px] font-normal tracking-[-0.9px] whitespace-nowrap">mohird</span>
      </div>
      <div className="flex h-[70px] shrink-0 items-center bg-[#0663dd] text-white">
        <svg viewBox="0 0 14 20" className="h-[20px] w-[14px]" fill="none"><path d="M12.500 1 3 10l9.500 9" stroke="#f0f0f0" strokeWidth="4" /></svg>
        <HouseOutline className="ml-[39px] h-[13px] w-[14px] text-[#dce9fb]" />
      </div>
      <div className="flex min-h-0 flex-1">
        <div className="flex min-w-0 flex-1 flex-col">
          <div className="flex h-[253px] shrink-0 flex-col bg-[#f4f8fb] pt-[49px] pl-[25px] text-[#222b52]">
            <div className="text-[20px] leading-[31px] font-medium whitespace-nowrap">Diqqa<br />tashl</div>
            <div className="ml-[-3px] h-[36px] pt-px text-[20px] leading-[34px] font-medium tracking-[-0.1px]">Attac</div>
            <div className="mt-[6px] flex h-[54px] w-[300px] items-center rounded-[4px] border border-[#e3ebec] bg-[#f3f7f8] pl-[14px]">
              <svg viewBox="0 0 26 30" className="h-[30px] w-[26px]" fill="none" stroke="#5a5f8e" strokeWidth="1.200">
                <path d="M10 .6H2Q.6 .6 .6 2V28Q.6 29.400 2 29.400H24Q25.400 29.400 25.400 28V7.500L18.500 .6H14M18.500 .6V7.500H25.400" />
                <path d="M12 1V14" strokeWidth="2.400" strokeDasharray="1.500 1.500" />
                <rect x="10.200" y="14" width="4" height="6.400" />
              </svg>
            </div>
            <div className="mt-[24px] flex text-[14.500px] leading-[20px] tracking-[-0.15px] whitespace-nowrap text-[#0f6ddc]">
              <svg viewBox="0 0 11 6" className="mt-[8px] mr-[4px] h-[6px] w-[11px]" fill="none" stroke="currentColor"><path d="M11 3H1M3 .8 .8 3 3 5.200" strokeWidth="1" /></svg>
              Oldin
            </div>
          </div>
          <div className="flex min-h-0 flex-1 overflow-hidden pl-[70px] text-[#7a7c80]">
            <p className="w-[270px] shrink-0 pt-[61px] font-['Open_Sans','Noto_Sans',sans-serif] text-[16px] leading-[25.700px]">O'z bilimlaringizni minglab<br />talabalar bilan o'rtoqlashing va<br />Mohirdev bilan oylik<br />imtiyozlardan foydalaning.</p>
            <div className="flex flex-col pt-[36px] text-[14px] leading-[34px] tracking-[-0.12px]">
              <h3 className="h-[27px] text-[16px] leading-[24px] font-bold tracking-normal text-[#1b2550]">Platforma</h3>
              <span>Bepul kurslar</span>
              <span>Pullik kurslar</span>
            </div>
          </div>
          <div className="flex h-[64px] shrink-0 bg-white text-[12px] tracking-[-0.05px] text-[#868a91] shadow-[0_-2px_14px_rgba(50,60,110,0.08)]">
            <div className="ml-[14px] flex w-[37px] flex-col items-center pt-[11px] text-[#f9594b]">
              <HouseOutline className="mr-px h-[19px] w-[20px]" />
              <span className="mt-[5px] leading-[16px]">Asosiy</span>
            </div>
            <div className="ml-[141px] flex w-[76px] flex-col items-center pt-[13px]">
              <svg viewBox="0 0 16 16" className="h-[16px] w-[16px]" fill="none" stroke="#2c2e3c"><path d="M.5 .5H6.500V6.500H.5ZM9.500 .5H15.500V6.500H9.500ZM.5 9.500H6.500V15.500H.5ZM9.500 9.500H15.500V15.500H9.500Z" /></svg>
              <span className="mt-[5px] leading-[16px]">Kategoriyalar</span>
            </div>
            <div className="ml-[140px] flex w-[46px] flex-col items-center pt-[12px]">
              <svg viewBox="0 0 19 19" className="h-[19px] w-[19px]" fill="none" stroke="#565b70" strokeWidth="1.100"><circle cx="8" cy="8" r="7.300" /><path d="M13.400 13.400 18.400 18.400" /></svg>
              <span className="mt-[4px] leading-[16px]">Qidirish</span>
            </div>
            <div className="ml-[140px] flex w-[42px] flex-col items-center pt-[16px]">
              <svg viewBox="0 0 16 13" className="h-[13px] w-[16px]"><path d="M0 .5H16M0 6.500H16M0 12.500H16" stroke="#2c2e3c" /></svg>
              <span className="mt-[5px] leading-[16px]">Menyu</span>
            </div>
          </div>
        </div>
        <div className="w-[14px] shrink-0 border-l border-[#cfcfcd] bg-[#ededeb]" />
      </div>
    </section>
  );
}

export default function App() {
  return (
    <div className="relative h-[768px] w-[1366px] overflow-hidden bg-[#08090c] font-['Noto_Sans','Open_Sans',sans-serif]">
      <Panel />
      <Browser />
      <FileManager />
      <div className="absolute top-[60px] left-[683px] h-[703px] w-[18px] bg-linear-to-r from-black/25 to-transparent" />
      <Archiver />
    </div>
  );
}
